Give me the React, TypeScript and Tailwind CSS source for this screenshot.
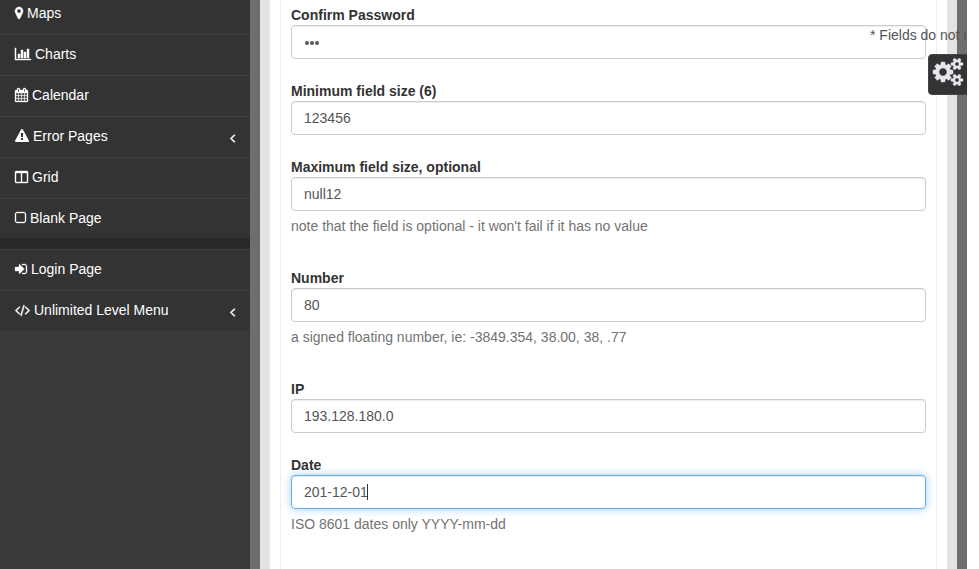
import React from "react";

interface IconProps {
  d: string;
  w: number;
  size?: number;
  weight?: number;
  className?: string;
}

// Glyphs are drawn on a 1792-unit em square; w is the advance width in the same units.
// weight thickens thin outlines so they stay solid at small sizes.
function Icon({ d, w, size = 14, weight = 0, className = "" }: IconProps) {
  return (
    <svg
      viewBox={`0 0 ${w} 1792`}
      width={(w * size) / 1792}
      height={size}
      fill="currentColor"
      stroke={weight ? "currentColor" : "none"}
      strokeWidth={weight}
      className={`block shrink-0 overflow-visible ${className}`}
    >
      <path d={d} />
    </svg>
  );
}

const ANGLE_LEFT =
  "M627 544q0 13-10 23l-393 393 393 393q10 10 10 23t-10 23l-50 50q-10 10-23 10t-23-10l-466-466q-10-10-10-23t10-23l466-466q10-10 23-10t23 10l50 50q10 10 10 23z";

const SMALL_COG =
  "q0 16-149 31-12 27-30 52 51 113 51 138 0 4-4 7-122 71-124 71-8 0-46-47t-52-68q-20 2-30 2t-30-2q-14 21-52 68t-46 47q-2 0-124-71-4-3-4-7 0-25 51-138-18-25-30-52-149-15-149-31v-140q0-16 149-31 13-29 30-52-51-113-51-138 0-4 4-7 4-2 35-20t59-34 30-16q8 0 46 46.5t52 67.5q20-2 30-2t30 2q51-71 92-112l6-2q4 0 124 70 4 3 4 7 0 25-51 138 17 23 30 52 149 15 149 31z";

const COGS =
  "M896 896q0-106-75-181t-181-75-181 75-75 181 75 181 181 75 181-75 75-181zm768 512q0-52-38-90t-90-38-90 38-38 90q0 53 37.5 90.5t90.5 37.5 90.5-37.5 37.5-90.5zm0-1024q0-52-38-90t-90-38-90 38-38 90q0 53 37.5 90.5t90.5 37.5 90.5-37.5 37.5-90.5zm-384 421v185q0 10-7 19.5t-16 10.5l-155 24q-11 35-32 76 34 48 90 115 7 11 7 20 0 12-7 19-23 30-82.5 89.5t-78.5 59.5q-11 0-21-7l-115-90q-37 19-77 31-11 108-23 155-7 24-30 24h-186q-11 0-20-7.5t-10-17.5l-23-153q-34-10-75-31l-118 89q-7 7-20 7-11 0-21-8-144-133-144-160 0-9 7-19 10-14 41-53t47-61q-23-44-35-82l-152-24q-10-1-17-9.5t-7-19.5v-185q0-10 7-19.5t16-10.5l155-24q11-35 32-76-34-48-90-115-7-11-7-20 0-12 7-20 22-30 82-89t79-59q11 0 21 7l115 90q34-18 77-32 11-108 23-154 7-24 30-24h186q11 0 20 7.5t10 17.5l23 153q34 10 75 31l118-89q8-7 20-7 11 0 21 8 144 133 144 160 0 8-7 19-12 16-42 54t-45 60q23 48 34 82l152 23q10 2 17 10.5t7 19.5z" +
  "M1920 1338v140" +
  SMALL_COG +
  "M1920 314v140" +
  SMALL_COG;

interface Item {
  label: string;
  d: string;
  w: number;
  weight?: number;
  arrow?: boolean;
}

const pages: Item[] = [
  {
    label: "Maps",
    w: 1024,
    weight: 60,
    d: "M768 640q0-106-75-181t-181-75-181 75-75 181 75 181 181 75 181-75 75-181zm256 0q0 109-33 179l-364 774q-16 33-47.5 52t-67.5 19-67.5-19-46.5-52l-365-774q-33-70-33-179 0-212 150-362t362-150 362 150 150 362z",
  },
  {
    label: "Charts",
    w: 2048,
    weight: 60,
    d: "M640 896v512h-256v-512h256zm384-512v1024h-256v-1024h256zm1024 1152v128h-2048v-1536h128v1408h1920zm-640-896v768h-256v-768h256zm384-384v1152h-256v-1152h256z",
  },
  {
    label: "Calendar",
    w: 1664,
    weight: 40,
    d: "M128 1664h288v-288h-288v288zm352 0h320v-288h-320v288zm-352-352h288v-320h-288v320zm352 0h320v-320h-320v320zm-352-384h288v-288h-288v288zm736 736h320v-288h-320v288zm-384-736h320v-288h-320v288zm768 736h288v-288h-288v288zm-384-352h320v-320h-320v320zm-352-864v-288q0-13-9.5-22.5t-22.5-9.5h-64q-13 0-22.5 9.5t-9.5 22.5v288q0 13 9.5 22.5t22.5 9.5h64q13 0 22.5-9.5t9.5-22.5zm736 864h288v-320h-288v320zm-384-384h320v-288h-320v288zm384 0h288v-288h-288v288zm32-480v-288q0-13-9.5-22.5t-22.5-9.5h-64q-13 0-22.5 9.5t-9.5 22.5v288q0 13 9.5 22.5t22.5 9.5h64q13 0 22.5-9.5t9.5-22.5zm384-64v1280q0 52-38 90t-90 38h-1408q-52 0-90-38t-38-90v-1280q0-52 38-90t90-38h128v-96q0-66 47-113t113-47h64q66 0 113 47t47 113v96h384v-96q0-66 47-113t113-47h64q66 0 113 47t47 113v96h128q52 0 90 38t38 90z",
  },
  {
    label: "Error Pages",
    w: 1792,
    arrow: true,
    d: "M1024 1375v-190q0-14-9.5-23.5t-22.5-9.5h-192q-13 0-22.5 9.5t-9.5 23.5v190q0 14 9.5 23.5t22.5 9.5h192q13 0 22.5-9.5t9.5-23.5zm-2-374l18-459q0-12-10-19-13-11-24-11h-220q-11 0-24 11-10 7-10 21l17 457q0 10 10 16.5t24 6.5h185q14 0 23.5-6.5t10.5-16.5zm-14-934l768 1408q35 63-2 126-17 29-46.5 46t-63.5 17h-1536q-34 0-63.5-17t-46.5-46q-37-63-2-126l768-1408q17-31 47-49t65-18 65 18 47 49z",
  },
  {
    label: "Grid",
    w: 1664,
    weight: 50,
    d: "M160 1536h608v-1152h-640v1120q0 13 9.5 22.5t22.5 9.5zm1376-32v-1120h-640v1152h608q13 0 22.5-9.5t9.5-22.5zm128-1216v1216q0 66-47 113t-113 47h-1344q-66 0-113-47t-47-113v-1216q0-66 47-113t113-47h1344q66 0 113 47t47 113z",
  },
  {
    label: "Blank Page",
    w: 1408,
    weight: 40,
    d: "M1120 256h-832q-66 0-113 47t-47 113v832q0 66 47 113t113 47h832q66 0 113-47t47-113v-832q0-66-47-113t-113-47zm288 160v832q0 119-84.5 203.5t-203.5 84.5h-832q-119 0-203.5-84.5t-84.5-203.5v-832q0-119 84.5-203.5t203.5-84.5h832q119 0 203.5 84.5t84.5 203.5z",
  },
];

const extras: Item[] = [
  {
    label: "Login Page",
    w: 1536,
    weight: 40,
    d: "M1184 896q0 26-19 45l-544 544q-19 19-45 19t-45-19-19-45v-288h-448q-26 0-45-19t-19-45v-384q0-26 19-45t45-19h448v-288q0-26 19-45t45-19 45 19l544 544q19 19 19 45zm352-352v704q0 119-84.5 203.5t-203.5 84.5h-320q-13 0-22.5-9.5t-9.5-22.5q0-4-1-20t-.5-26.5 3-23.5 10-19.5 20.5-6.5h320q66 0 113-47t47-113v-704q0-66-47-113t-113-47h-312l-11.5-1-11.5-3-8-5.5-7-9-2-13.5q0-4-1-20t-.5-26.5 3-23.5 10-19.5 20.5-6.5h320q119 0 203.5 84.5t84.5 203.5z",
  },
  {
    label: "Unlimited Level Menu",
    w: 1920,
    weight: 70,
    arrow: true,
    d: "M617 1399l-50 50q-10 10-23 10t-23-10l-466-466q-10-10-10-23t10-23l466-466q10-10 23-10t23 10l50 50q10 10 10 23t-10 23l-393 393 393 393q10 10 10 23t-10 23zm591-1067l-373 1291q-4 13-15.5 19.5t-23.5 2.5l-62-17q-13-4-19.5-15.5t-2.5-24.5l373-1291q4-13 15.5-19.5t23.5-2.5l62 17q13 4 19.5 15.5t2.5 24.5zm657 651l-466 466q-10 10-23 10t-23-10l-50-50q-10-10-10-23t10-23l393-393-393-393q-10-10-10-23t10-23l50-50q10-10 23-10t23 10l466 466q10 10 10 23t-10 23z",
  },
];

function MenuItem({ item }: { item: Item }) {
  return (
    <li className="flex h-[41px] items-center border-t border-[#404040] bg-[#333333] pr-[15px] pb-0.5 pl-[15px] text-white last:h-10 last:pb-px">
      <Icon d={item.d} w={item.w} weight={item.weight} />
      <span className="ml-1 pb-px">{item.label}</span>
      {item.arrow && <Icon d={ANGLE_LEFT} w={640} weight={90} className="mt-1 ml-auto" />}
    </li>
  );
}

interface FieldProps {
  label: string;
  value: string;
  help?: string;
  focused?: boolean;
  password?: boolean;
}

function Field({ label, value, help, focused, password }: FieldProps) {
  return (
    <div className={help ? "mb-8" : "mb-[22px]"}>
      <div className="font-bold text-[#333333]">{label}</div>
      <div
        className={`flex h-[34px] items-center rounded-[4px] border bg-white px-3 text-[#555555] ${
          focused
            ? "border-[#66afe9] shadow-[inset_0_1px_1px_rgba(0,0,0,0.075),0_0_8px_rgba(102,175,233,0.6)]"
            : "border-[#cccccc] shadow-[inset_0_1px_1px_rgba(0,0,0,0.075)]"
        }`}
      >
        {password ? (
          <span className="flex gap-px pt-px pl-px">
            {value.split("").map((_, i) => (
              <i key={i} className="size-1 rounded-full bg-[#555555]" />
            ))}
          </span>
        ) : (
          <span>{value}</span>
        )}
        {focused && <span className="-ml-px h-4 w-px bg-[#333333]" />}
      </div>
      {help && <div className="mt-[5px] text-[#737373]">{help}</div>}
    </div>
  );
}

export default function App() {
  return (
    <div className="h-[569px] w-[979px] overflow-hidden bg-white font-['Liberation_Sans',Arial,sans-serif] text-sm leading-5">
      <div className="relative flex h-full w-[967px] overflow-hidden bg-[#6e6e6e]">
        <nav className="w-[250px] shrink-0 bg-[#3a3a3a]">
          <ul className="-mt-[7px]">
            {pages.map((p) => (
              <MenuItem key={p.label} item={p} />
            ))}
          </ul>
          <div className="h-[11px] bg-[#282828]" />
          <ul>
            {extras.map((p) => (
              <MenuItem key={p.label} item={p} />
            ))}
          </ul>
        </nav>
        <main className="ml-2.5 w-[697px] shrink-0 bg-[#e3e3e3] px-2.5">
          <div className="h-full bg-white px-2.5">
            <form className="h-full border-x border-[#eeeeee] px-2.5 pt-[5px]">
              <Field label="Confirm Password" value="123" password />
              <Field label="Minimum field size (6)" value="123456" />
              <Field
                label="Maximum field size, optional"
                value="null12"
                help="note that the field is optional - it won't fail if it has no value"
              />
              <Field label="Number" value="80" help="a signed floating number, ie: -3849.354, 38.00, 38, .77" />
              <Field label="IP" value="193.128.180.0" />
              <Field label="Date" value="201-12-01" help="ISO 8601 dates only YYYY-mm-dd" focused />
            </form>
          </div>
        </main>
        <div className="absolute top-[25px] left-[870px] whitespace-nowrap text-[#555555]">
          * Fields do not match
        </div>
        <div className="absolute top-[54px] left-[928px] flex h-[41px] w-[60px] rounded-[4px] border border-[#444444] bg-[#333333] pt-[3px] pl-1 text-[#e6e6ee]">
          <Icon d={COGS} w={1920} size={28} weight={30} />
        </div>
      </div>
    </div>
  );
}
